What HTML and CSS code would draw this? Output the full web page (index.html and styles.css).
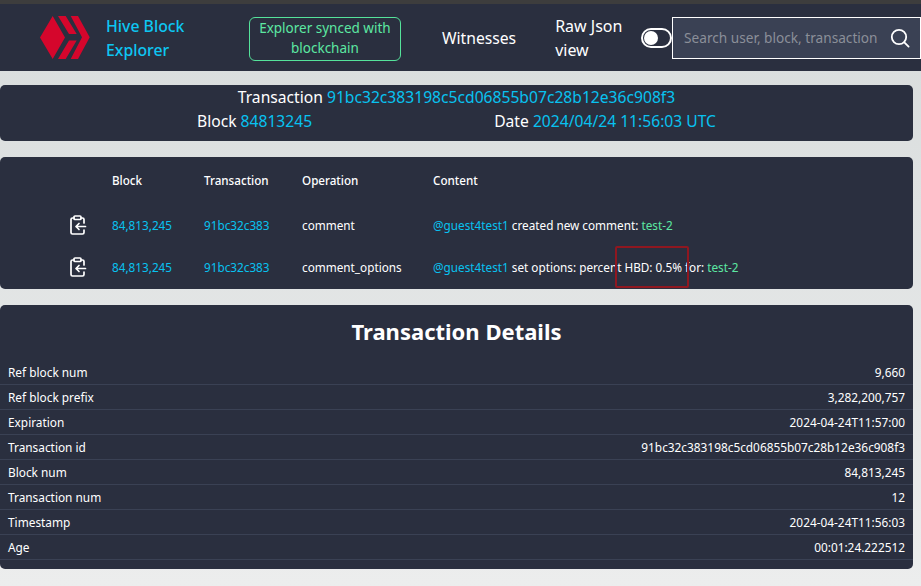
FILE: index.html
```html
<!DOCTYPE html>
<html lang="en">
<head>
  <meta charset="UTF-8">
  <title>Hive Block Explorer</title>
  <meta name="viewport" content="width=device-width, initial-scale=1.0">
  <link rel="stylesheet" href="styles.css">
</head>
<body>
<div class="top-strip"></div>
<nav class="navbar">
  <svg class="logo" width="50" height="43" viewBox="40 16 50 43">
    <path fill="#d5062c" d="M40 37.5 52.700 16 65 37.500 52.700 59zM58 16h7.700l11 18H69zM70.700 16H78l11.700 21.300L78 59h-7.300L82 37.300zM69 40.500h7.700L65.700 59H58z"/>
  </svg>
  <a class="brand">Hive Block Explorer</a>
  <div class="sync-badge">Explorer synced with blockchain</div>
  <a class="nav-link">Witnesses</a>
  <div class="raw-label">Raw Json view</div>
  <div class="toggle"><span class="toggle-knob"></span></div>
  <div class="search-box">
    <input class="search-input" type="text" placeholder="Search user, block, transaction">
    <svg width="20" height="20" viewBox="0 0 20 20" fill="none" stroke="#fff" stroke-width="1.800" stroke-linecap="round">
      <circle cx="9" cy="9" r="7.200"/>
      <path d="M14.300 14.300 18.600 18.600"/>
    </svg>
  </div>
</nav>

<div class="card tx-head">
  <div>Transaction <span class="link">91bc32c383198c5cd06855b07c28b12e36c908f3</span></div>
  <div class="tx-meta">
    <div>Block <span class="link">84813245</span></div>
    <div>Date <span class="link">2024/04/24 11:56:03 UTC</span></div>
  </div>
</div>

<div class="card ops-card">
  <table class="ops-table">
    <thead>
      <tr>
        <th class="col-icon"></th>
        <th class="col-block">Block</th>
        <th class="col-tx">Transaction</th>
        <th class="col-op">Operation</th>
        <th>Content</th>
      </tr>
    </thead>
    <tbody>
      <tr>
        <td>
          <svg class="op-icon" width="18" height="20" viewBox="0 0 18 20" fill="none" stroke="#fff" stroke-width="1.700" stroke-linecap="round" stroke-linejoin="round">
            <path d="M5 3H3.500A1.500 1.500 0 0 0 2 4.500v13A1.500 1.500 0 0 0 3.500 19h10a1.500 1.500 0 0 0 1.500-1.500V15M15 8V4.500A1.500 1.500 0 0 0 13.500 3H12"/>
            <rect x="5" y="1" width="7" height="3.500" rx="1"/>
            <path d="M16.500 11.500H7M10 8.500l-3 3 3 3"/>
          </svg>
        </td>
        <td class="link">84,813,245</td>
        <td class="link">91bc32c383</td>
        <td>comment</td>
        <td><span class="link">@guest4test1</span> created new comment: <span class="perm">test-2</span></td>
      </tr>
      <tr>
        <td>
          <svg class="op-icon" width="18" height="20" viewBox="0 0 18 20" fill="none" stroke="#fff" stroke-width="1.700" stroke-linecap="round" stroke-linejoin="round">
            <path d="M5 3H3.500A1.500 1.500 0 0 0 2 4.500v13A1.500 1.500 0 0 0 3.500 19h10a1.500 1.500 0 0 0 1.500-1.500V15M15 8V4.500A1.500 1.500 0 0 0 13.500 3H12"/>
            <rect x="5" y="1" width="7" height="3.500" rx="1"/>
            <path d="M16.500 11.500H7M10 8.500l-3 3 3 3"/>
          </svg>
        </td>
        <td class="link">84,813,245</td>
        <td class="link">91bc32c383</td>
        <td>comment_options</td>
        <td><span class="link">@guest4test1</span> set options: percent HBD: 0.5% for: <span class="perm">test-2</span></td>
      </tr>
    </tbody>
  </table>
  <div class="highlight-box"></div>
</div>

<div class="card details-card">
  <h2 class="details-title">Transaction Details</h2>
  <div class="detail-row"><span>Ref block num</span><span>9,660</span></div>
  <div class="detail-row"><span>Ref block prefix</span><span>3,282,200,757</span></div>
  <div class="detail-row"><span>Expiration</span><span>2024-04-24T11:57:00</span></div>
  <div class="detail-row"><span>Transaction id</span><span>91bc32c383198c5cd06855b07c28b12e36c908f3</span></div>
  <div class="detail-row"><span>Block num</span><span>84,813,245</span></div>
  <div class="detail-row"><span>Transaction num</span><span>12</span></div>
  <div class="detail-row"><span>Timestamp</span><span>2024-04-24T11:56:03</span></div>
  <div class="detail-row"><span>Age</span><span>00:01:24.222512</span></div>
</div>
</body>
</html>
```

FILE: styles.css
```css
html, body {
  margin: 0;
  height: 100%;
}
body {
  background: linear-gradient(180deg, #d8dcdc 0%, #eceded 100%);
  font-family: "Noto Sans", "Open Sans", sans-serif;
  color: #fff;
  overflow: hidden;
}
.top-strip {
  height: 4px;
  background: #3d3d3d;
}
.navbar {
  height: 67px;
  background: #2a2f3f;
  display: flex;
  align-items: center;
}
.logo {
  margin-left: 40px;
  flex: none;
}
.brand {
  width: 100px;
  margin-left: 16px;
  font-size: 15.8px;
  font-weight: 500;
  line-height: 24px;
  color: #0dc6f2;
}
.sync-badge {
  width: 150px;
  height: 42px;
  margin: 2px 0 0 43px;
  border: 1px solid #55e39b;
  border-radius: 6px;
  font-size: 13.5px;
  line-height: 20px;
  text-align: center;
  color: #5ce8a2;
}
.nav-link {
  margin-left: 41px;
  font-size: 15.7px;
}
.raw-label {
  width: 80px;
  margin-left: 39px;
  font-size: 16px;
  line-height: 24px;
}
.toggle {
  width: 31px;
  height: 20px;
  margin-left: 6px;
  box-sizing: border-box;
  border: 2px solid #fff;
  border-radius: 10px;
  display: flex;
  align-items: center;
  padding-left: 1px;
}
.toggle-knob {
  width: 14px;
  height: 14px;
  border-radius: 50%;
  background: #fff;
}
.search-box {
  width: 249px;
  height: 42px;
  box-sizing: border-box;
  border: 1px solid #fff;
  background: #3a4154;
  display: flex;
  align-items: center;
  padding: 0 10px 0 11px;
}
.search-input {
  flex: 1;
  min-width: 0;
  border: none;
  outline: none;
  background: none;
  padding: 0;
  font: 13.65px "Noto Sans", sans-serif;
  color: #fff;
}
.search-input::placeholder {
  color: #8b8f99;
  opacity: 1;
}
.card {
  width: 913px;
  background: #2a2f3f;
  border-radius: 5px;
}
.link {
  color: #08c2f0;
}
.perm {
  color: #5ce8a2;
}
.tx-head {
  height: 56px;
  margin-top: 14px;
  font-size: 15.65px;
  line-height: 24px;
  text-align: center;
}
.tx-meta {
  display: flex;
  justify-content: center;
  gap: 182px;
}
.ops-card {
  position: relative;
  height: 132px;
  margin-top: 16px;
}
.ops-table {
  border-collapse: collapse;
  table-layout: fixed;
  width: 100%;
  font-size: 11.75px;
  text-align: left;
}
.ops-table th {
  height: 47px;
  padding: 0;
  font-weight: 500;
  font-size: 11.65px;
}
.ops-table td {
  height: 42px;
  padding: 0;
}
.col-icon { width: 112px; }
.col-block { width: 92px; }
.col-tx { width: 98px; }
.col-op { width: 131px; }
.op-icon {
  display: block;
  margin-left: 69px;
}
.highlight-box {
  position: absolute;
  left: 615px;
  top: 89px;
  width: 70px;
  height: 38px;
  border: 2px solid #8f1720;
  border-radius: 2px;
}
.details-card {
  height: 264px;
  margin-top: 16px;
}
.details-title {
  margin: 0;
  height: 55px;
  font-size: 22px;
  line-height: 52px;
  font-weight: 700;
  text-align: center;
}
.detail-row {
  height: 25px;
  box-sizing: border-box;
  border-bottom: 1px solid #3a4154;
  padding: 0 8px;
  display: flex;
  justify-content: space-between;
  align-items: center;
  font-size: 11.85px;
}
```
